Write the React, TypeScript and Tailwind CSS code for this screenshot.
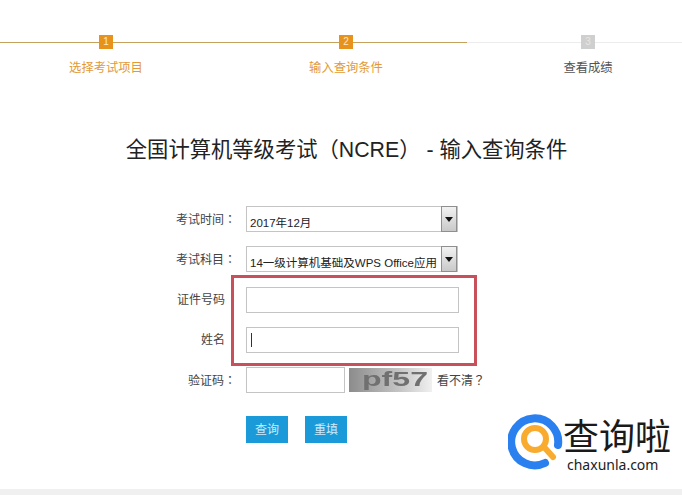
const font = "font-['Liberation_Sans','Noto_Sans_CJK_SC',sans-serif]";
const punct = "font-['Noto_Sans_CJK_TC',sans-serif]";

const Step = ({ n, label, active, className }: { n: number; label: string; active: boolean; className: string }) => {
	return (
		<div className={`relative w-[80px] flex flex-col items-center ${className}`}>
			<div
				className={`w-[14px] h-[14px] flex items-center justify-center text-[10px] leading-none ${
					active ? "bg-[#e8921e] text-[#ffe9c4]" : "bg-[#cfcfcf] text-[#e6e6e6]"
				}`}
			>
				{n}
			</div>
			<div
				className={`mt-[12px] text-[12.3px] leading-[14px] whitespace-nowrap ${
					active ? "text-[#e39a35]" : "text-[#555555]"
				}`}
			>
				{label}
			</div>
		</div>
	);
};

const Label = ({ children, colon }: { children: string; colon?: boolean }) => {
	return (
		<div className="w-[60px] mr-[10px] text-right text-[12px] text-[#444444] whitespace-nowrap">
			{children}
			{colon ? <span className={punct}>：</span> : <span className="inline-block w-[11px]" />}
		</div>
	);
};

const FakeSelect = ({ value }: { value: string }) => {
	return (
		<div className="w-[212px] h-[26px] border border-[#c4c4c4] bg-white flex items-end justify-between pl-[3px]">
			<span className="text-[11.5px] leading-[16px] text-[#222222] whitespace-nowrap">{value}</span>
			<div className="w-[16px] h-[26px] -mt-px mb-[-1px] border border-[#8f8f8f] bg-gradient-to-b from-[#f2f2f2] to-[#c9c9c9] flex items-center justify-center">
				<svg width="8" height="5" viewBox="0 0 8 5">
					<path d="M0 0h8L4 5z" fill="#111111" />
				</svg>
			</div>
		</div>
	);
};

const Captcha = () => {
	return (
		<svg width="83" height="24" viewBox="0 0 83 24" className="ml-[4px] blur-[0.4px]">
			<defs>
				<linearGradient id="cap" x1="0" x2="1" y1="0" y2="0">
					<stop offset="0" stopColor="#8c8c8c" />
					<stop offset="0.6" stopColor="#c4c4c4" />
					<stop offset="1" stopColor="#f0f0f0" />
				</linearGradient>
			</defs>
			<rect width="83" height="24" fill="url(#cap)" />
			<text
				x="13"
				y="18"
				fontFamily="'Liberation Sans', sans-serif"
				fontWeight="700"
				fontSize="21"
				fill="#707070"
				textLength="66"
				lengthAdjust="spacingAndGlyphs"
			>
				pf57
			</text>
		</svg>
	);
};

const Logo = () => {
	return (
		<div className="absolute left-[508px] top-[410px] flex items-start">
			<svg width="58" height="60" viewBox="0 0 58 60" className="shrink-0">
				<path d="M50 35A23.5 23.5 0 1 0 37 53" fill="none" stroke="#2b80f0" strokeWidth="8" strokeLinecap="round" />
				<circle cx="27" cy="29" r="11" fill="none" stroke="#f8ab2f" strokeWidth="6" />
				<path d="M36 37l9 10" stroke="#f8ab2f" strokeWidth="6" strokeLinecap="round" />
			</svg>
			<div className="-ml-[3px] mt-[3px] flex flex-col items-start">
				<div className="text-[36px] leading-[42px] text-[#1a1a1a] whitespace-nowrap font-['Noto_Sans_CJK_SC',sans-serif]">
					查询啦
				</div>
				<div className="ml-[4px] mt-[2px] text-[14px] leading-[16px] text-[#222222] font-['Noto_Sans','Liberation_Sans',sans-serif] whitespace-nowrap">
					chaxunla.com
				</div>
			</div>
		</div>
	);
};

const App = () => {
	return (
		<div className={`relative w-[682px] h-[495px] overflow-hidden bg-white flex flex-col ${font}`}>
			<div className="relative pt-[35px] flex">
				<div className="absolute left-0 right-0 top-[42px] h-px bg-[#ececec]" />
				<div className="absolute left-0 top-[42px] w-[467px] h-px bg-[#c4a25e]" />
				<Step n={1} label="选择考试项目" active={true} className="ml-[66px]" />
				<Step n={2} label="输入查询条件" active={true} className="ml-[160px]" />
				<Step n={3} label="查看成绩" active={false} className="ml-[162px]" />
			</div>

			<h1 className="mt-[57px] pl-[11px] text-center text-[21.3px] leading-[32px] text-[#222222] whitespace-nowrap">
				全国计算机等级考试<span className={punct}>（</span>NCRE<span className={punct}>）</span> - 输入查询条件
			</h1>

			<div className="mt-[40px] ml-[176px] flex flex-col">
				<div className="flex items-center">
					<Label colon>考试时间</Label>
					<FakeSelect value="2017年12月" />
				</div>
				<div className="mt-[14px] flex items-center">
					<Label colon>考试科目</Label>
					<FakeSelect value="14一级计算机基础及WPS Office应用" />
				</div>
				<div className="mt-[15px] flex items-center">
					<Label>证件号码</Label>
					<div className="w-[213px] h-[26px] border border-[#c4c4c4] bg-white" />
				</div>
				<div className="mt-[14px] flex items-center">
					<Label>姓名</Label>
					<div className="w-[213px] h-[26px] border border-[#c4c4c4] bg-white flex items-center pl-[4px]">
						<div className="w-px h-[14px] bg-[#333333]" />
					</div>
				</div>
				<div className="mt-[14px] flex items-center">
					<Label colon>验证码</Label>
					<div className="w-[99px] h-[26px] border border-[#c4c4c4] bg-white" />
					<Captcha />
					<span className="ml-[5px] text-[12px] text-[#444444] whitespace-nowrap">
						看不清<span className={punct}>？</span>
					</span>
				</div>
				<div className="mt-[23px] ml-[70px] flex gap-[17px]">
					<button className="w-[42px] h-[27px] bg-[#1a9ad9] text-[#cfeaf8] text-[12px]">查询</button>
					<button className="w-[42px] h-[27px] bg-[#1a9ad9] text-[#cfeaf8] text-[12px]">重填</button>
				</div>
			</div>

			<div className="absolute left-[231px] top-[275px] w-[246px] h-[91px] border-[3px] border-[#c8505a]" />
			<Logo />
			<div className="absolute left-0 right-0 bottom-0 h-[6px] bg-[#f0f0f0]" />
		</div>
	);
};

export default App;
